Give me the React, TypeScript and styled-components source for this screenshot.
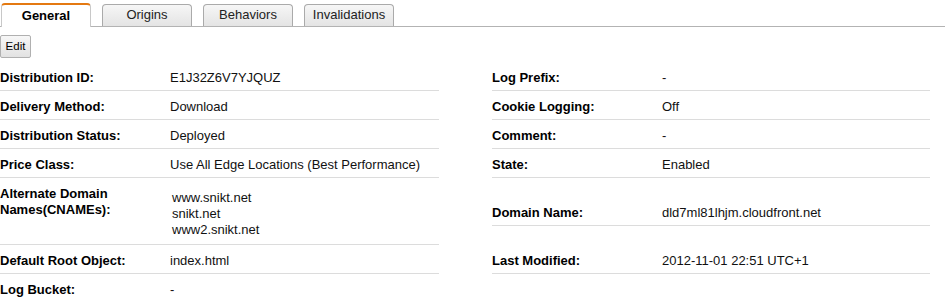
import React from 'react';
import styled, { createGlobalStyle } from 'styled-components';

type Item = { label: React.ReactNode; value: React.ReactNode; tall?: boolean };

const tabs = ['General', 'Origins', 'Behaviors', 'Invalidations'];

const cnames = ['www.snikt.net', 'snikt.net', 'www2.snikt.net'];

const getLeftRows = (): Item[] => [
  { label: 'Distribution ID:', value: 'E1J32Z6V7YJQUZ' },
  { label: 'Delivery Method:', value: 'Download' },
  { label: 'Distribution Status:', value: 'Deployed' },
  { label: 'Price Class:', value: 'Use All Edge Locations (Best Performance)' },
  {
    label: (
      <>
        Alternate Domain
        <br />
        Names(CNAMEs):
      </>
    ),
    value: (
      <CnameList>
        {cnames.map((c) => (
          <li key={c}>{c}</li>
        ))}
      </CnameList>
    ),
  },
  { label: 'Default Root Object:', value: 'index.html' },
  { label: 'Log Bucket:', value: '-' },
];

const rightRows: Item[] = [
  { label: 'Log Prefix:', value: '-' },
  { label: 'Cookie Logging:', value: 'Off' },
  { label: 'Comment:', value: '-' },
  { label: 'State:', value: 'Enabled' },
  { label: 'Domain Name:', value: 'dld7ml81lhjm.cloudfront.net', tall: true },
  { label: 'Last Modified:', value: '2012-11-01 22:51 UTC+1', tall: true },
];

export default function App() {
  const leftRows = getLeftRows();

  return (
    <>
      <GlobalStyle />
      <ContainerPage>
        <TabBar>
          {tabs.map((t, i) => (
            <Tab key={t} $active={i === 0}>
              {t}
            </Tab>
          ))}
        </TabBar>

        <Toolbar>
          <EditButton type="button">Edit</EditButton>
        </Toolbar>

        <Details>
          <Column $width={439}>
            {leftRows.map((r, i) => (
              <Row key={i} $last={i === leftRows.length - 1}>
                <Label>{r.label}</Label>
                <Value>{r.value}</Value>
              </Row>
            ))}
          </Column>
          <Column $width={438}>
            {rightRows.map((r, i) => (
              <Row key={i} $tall={r.tall}>
                <Label>{r.label}</Label>
                <Value>{r.value}</Value>
              </Row>
            ))}
          </Column>
        </Details>
      </ContainerPage>
    </>
  );
}

const GlobalStyle = createGlobalStyle`
  html, body {
    margin: 0;
    padding: 0;
    background: #fff;
  }
  body {
    font-family: "Liberation Sans", Arial, sans-serif;
    font-size: 13px;
    color: #000;
  }
`;

const ContainerPage = styled.div`
  width: 945px;
  height: 298px;
  overflow: hidden;
`;

const TabBar = styled.div`
  display: flex;
  align-items: flex-end;
  gap: 11px;
  height: 26px;
  padding-left: 1px;
  border-bottom: 1px solid #b3b3b3;
`;

const Tab = styled.div<{ $active?: boolean }>`
  box-sizing: border-box;
  width: 90px;
  display: flex;
  align-items: center;
  justify-content: center;
  border: 1px solid ${({ $active }) => ($active ? '#c8c8c8' : '#aaa')};
  border-bottom: none;
  border-radius: 4px 4px 0 0;
  font-size: 13px;
  color: #222;

  ${({ $active }) =>
    $active
      ? `
    height: 24px;
    margin-bottom: -1px;
    background: #fff;
    border-top: 2px solid #e47911;
    font-weight: bold;
    color: #000;
    padding-bottom: 2px;
  `
      : `
    height: 22px;
    padding-bottom: 2px;
    background: linear-gradient(#f6f6f6, #e4e4e4);
  `}
`;

const Toolbar = styled.div`
  display: flex;
  padding-top: 8px;
`;

const EditButton = styled.button`
  box-sizing: border-box;
  width: 31px;
  height: 23px;
  margin: 0;
  padding: 0 0 1px;
  font-family: "Liberation Sans", Arial, sans-serif;
  font-size: 11.5px;
  color: #000;
  background: linear-gradient(#f7f7f7, #e2e2e2);
  border: 1px solid #b0b0b0;
  border-radius: 2px;
`;

const Details = styled.div`
  display: flex;
  gap: 53px;
  margin-top: 4px;
`;

const Column = styled.div<{ $width: number }>`
  width: ${({ $width }) => $width}px;
  display: flex;
  flex-direction: column;
`;

const Row = styled.div<{ $tall?: boolean; $last?: boolean }>`
  box-sizing: border-box;
  display: grid;
  grid-template-columns: 170px 1fr;
  align-items: ${({ $tall }) => ($tall ? 'end' : 'start')};
  min-height: ${({ $tall }) => ($tall ? '48px' : '29px')};
  padding: 8px 0 4px;
  line-height: 16px;
  border-bottom: 1px solid ${({ $last }) => ($last ? 'transparent' : '#dcdcdc')};
`;

const Label = styled.div`
  font-weight: bold;
`;

const Value = styled.div`
  color: #111;
`;

const CnameList = styled.ul`
  list-style: none;
  margin: 4px 0 2px 2px;
  padding: 0;
`;
